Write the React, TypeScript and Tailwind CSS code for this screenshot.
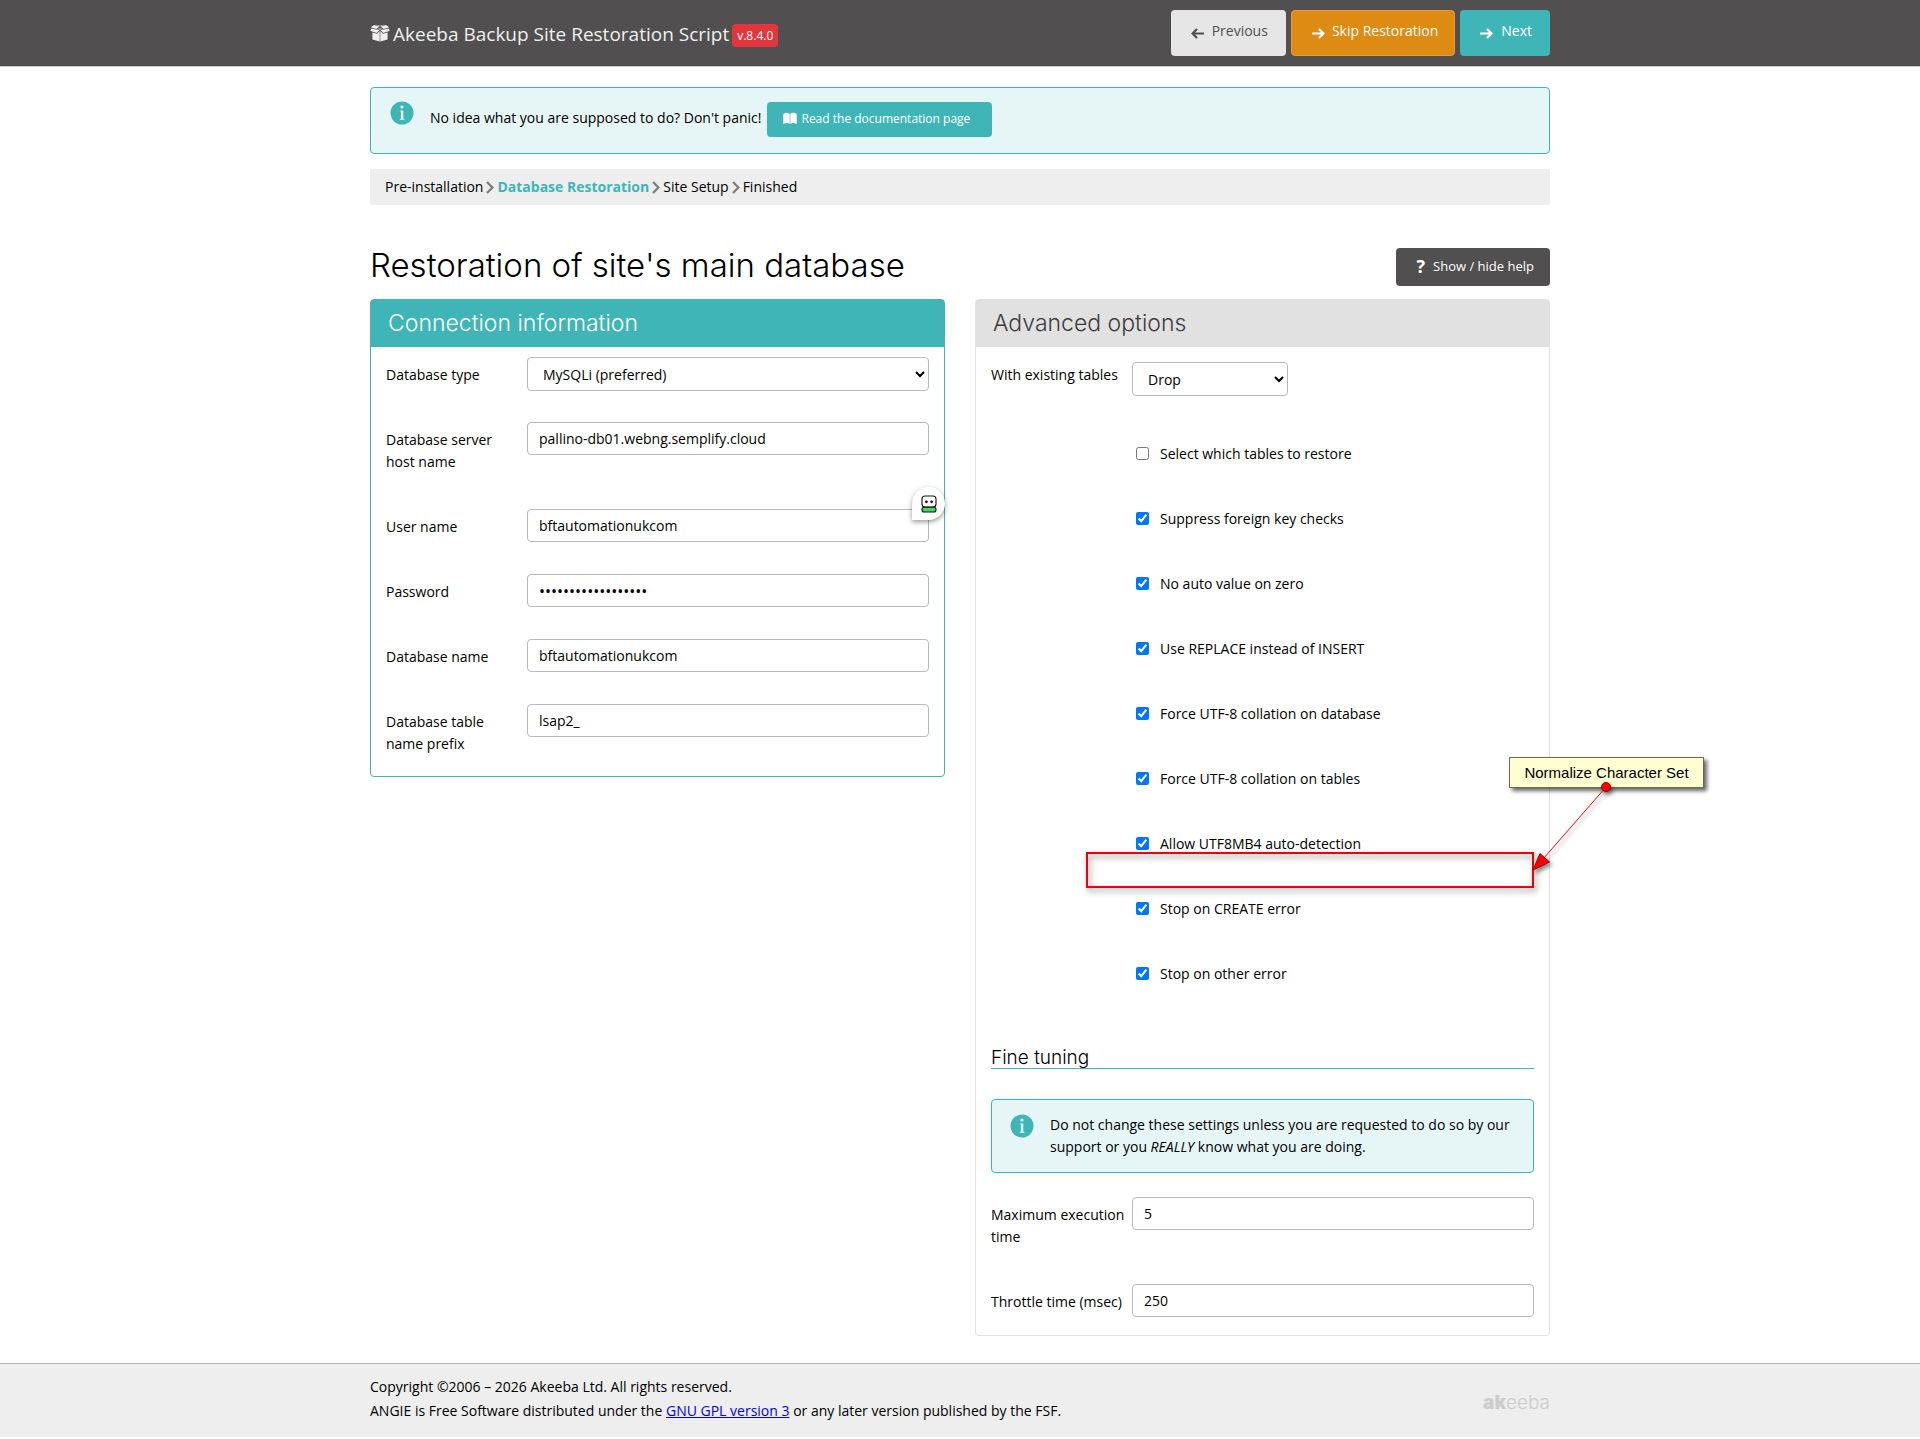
import type { ReactNode } from "react";

// small icon set used across the page
function BoxIcon() {
  return (
    <svg viewBox="0 0 20 18" className="w-5 h-[18px] mb-1 shrink-0" fill="#efefef" aria-hidden="true">
      <path d="M4.2 1 9.4 2.6 6.2 5 .6 3.2Z" />
      <path d="M15.8 1 10.6 2.6 13.8 5 19.4 3.2Z" />
      <path d="M5.4.4 10 1.8 14.6.4 10.4 2.2h-.8Z" />
      <path d="M.2 6.8 1.6 4.4 9.4 6.200 6.6 9Z" />
      <path d="M19.8 6.8 18.4 4.4 10.6 6.200 13.4 9Z" />
      <path d="M2.4 8.4 7 9.800 9.700 7V17.600L2.4 15.400Z" />
      <path d="M17.6 8.4 13 9.800 10.300 7V17.600L17.6 15.400Z" />
      <path d="M6.6 5.2 10 4l3.4 1.2L10 6Z" opacity=".6" />
    </svg>
  );
}

function ArrowIcon({ back = false }: { back?: boolean }) {
  return (
    <svg viewBox="0 0 13 11" className="mt-1 w-[13px] h-[11px] shrink-0" fill="none" stroke="currentColor" strokeWidth="2.2" aria-hidden="true">
      {back ? <path d="M13 5.5H2.2M6 1 1.6 5.5 6 10" /> : <path d="M0 5.5h10.8M7 1l4.4 4.5L7 10" />}
    </svg>
  );
}

function InfoIcon() {
  return (
    <svg viewBox="0 0 24 24" className="size-6 shrink-0" aria-hidden="true">
      <circle cx="12" cy="12" r="11.5" fill="#40b5b8" />
      <circle cx="12" cy="6" r="1.6" fill="#e6f6f6" />
      <path d="M9.8 9.4h3.5v8.4h1.1v.9H9.7v-.9h1.2V10.3H9.8Z" fill="#e6f6f6" />
    </svg>
  );
}

function BookIcon() {
  return (
    <svg viewBox="0 0 14 13" className="w-3.5 h-[13px] shrink-0" fill="currentColor" aria-hidden="true">
      <path d="M.3 2.2C1.6.2 5 .2 6.7 1.8V12C5 10.6 2.4 10.6.3 12.2Z" />
      <path d="M13.7 2.2C12.4.2 9 .2 7.3 1.8V12c1.7-1.4 4.3-1.4 6.4.2Z" />
    </svg>
  );
}

function Chevron() {
  return (
    <svg viewBox="0 0 8 13" className="w-2 h-[13px] shrink-0" fill="none" stroke="#7d7b7c" strokeWidth="2.2" aria-hidden="true">
      <path d="M1 1l5.4 5.5L1 12" />
    </svg>
  );
}

function RobotIcon() {
  return (
    <svg viewBox="0 0 16 18" className="w-4 h-[18px]" stroke="#111" strokeWidth="1.1" aria-hidden="true">
      <rect x="1" y="1" width="14" height="11" rx="3" fill="#fff" />
      <rect x="1" y="12.3" width="14" height="4.7" rx="2" fill="#3ddc5a" />
      <circle cx="5.4" cy="6.8" r="1.4" fill="#111" stroke="none" />
      <circle cx="10.6" cy="6.8" r="1.4" fill="#111" stroke="none" />
    </svg>
  );
}

const control = "border border-[#b9b9b9] rounded bg-white text-black";

function Row({ id, label, children }: { id: string; label: string; children: ReactNode }) {
  return (
    <div className="grid grid-cols-[137px_1fr] gap-x-1">
      <label htmlFor={id} className="pt-[7px] pb-[3px] leading-[22px]">{label}</label>
      <div className="relative h-8">{children}</div>
    </div>
  );
}

function TextRow({ id, label, value, children }: { id: string; label: string; value: string; children?: ReactNode }) {
  return (
    <Row id={id} label={label}>
      <input id={id} type="text" defaultValue={value} className={`${control} block w-full h-[33px] px-[11px]`} />
      {children}
    </Row>
  );
}

const checks = [
  { id: "specific", label: "Select which tables to restore", on: false },
  { id: "foreignkey", label: "Suppress foreign key checks", on: true },
  { id: "noautovalue", label: "No auto value on zero", on: true },
  { id: "replace", label: "Use REPLACE instead of INSERT", on: true },
  { id: "utf8db", label: "Force UTF-8 collation on database", on: true },
  { id: "utf8tables", label: "Force UTF-8 collation on tables", on: true },
  { id: "utf8mb4", label: "Allow UTF8MB4 auto-detection", on: true },
  { id: "createerror", label: "Stop on CREATE error", on: true },
  { id: "othererror", label: "Stop on other error", on: true },
];

function Header() {
  return (
    <header className="bg-[#514f50] border-b border-[#c9c9c9]">
      <div className="max-w-[1180px] mx-auto h-[66px] flex items-start justify-between pt-[10px]">
        <h1 className="flex items-center gap-[3px] h-[50px] text-[#efefef] text-[19px]">
          <BoxIcon />
          <span>Akeeba Backup Site Restoration Script</span>
          <span className="h-[23px] leading-[23px] px-[5px] rounded bg-[#e2363c] text-white text-xs">v.8.4.0</span>
        </h1>
        <div className="flex gap-[5px]">
          <button className="h-[46px] pl-5 pr-[18px] pb-1 flex items-center gap-2 rounded bg-[#e6e6e6] text-[#514f50]">
            <ArrowIcon back /> Previous
          </button>
          <button className="h-[46px] pl-5 pr-4 pb-1 flex items-center gap-[7px] rounded border border-[#f09a2c] bg-[#de8b14] text-white">
            <ArrowIcon /> Skip Restoration
          </button>
          <button className="h-[46px] pl-5 pr-[18px] pb-1 flex items-center gap-2 rounded bg-[#40b5b8] text-white">
            <ArrowIcon /> Next
          </button>
        </div>
      </div>
    </header>
  );
}

function ConnectionPanel() {
  return (
    <section className="border border-[#40b5b8] rounded">
      <h3 className="h-[47px] px-[17px] flex items-center bg-[#40b5b8] text-white font-[Inter] font-light text-[23px]">Connection information</h3>
      <div className="px-[15px] pt-[10px] pb-[18px] flex flex-col gap-[33px]">
        <Row id="dbtype" label="Database type">
          <select id="dbtype" className={`${control} block w-full h-[34px] pl-[11px]`}>
            <option>MySQLi (preferred)</option>
          </select>
        </Row>
        <TextRow id="dbhost" label="Database server host name" value="pallino-db01.webng.semplify.cloud" />
        <TextRow id="dbuser" label="User name" value="bftautomationukcom">
          <span className="absolute -right-4 -top-[22px] w-[33px] h-[33px] flex items-center justify-center bg-white rounded-full rounded-bl-none shadow-[0_2px_5px_rgba(0,0,0,0.4)]">
            <RobotIcon />
          </span>
        </TextRow>
        <Row id="dbpass" label="Password">
          <input id="dbpass" type="password" defaultValue="abcdefghijklmnopqr" className={`${control} block w-full h-[33px] px-[11px] text-base`} />
        </Row>
        <TextRow id="dbname" label="Database name" value="bftautomationukcom" />
        <TextRow id="prefix" label="Database table name prefix" value="lsap2_" />
      </div>
    </section>
  );
}

// note, arrow and frame drawn over the advanced panel
function Annotation() {
  return (
    <div className="pointer-events-none absolute inset-0">
      <div className="absolute top-[552px] right-[15px] w-[448px] h-9 border-2 border-[#f00000] drop-shadow-[2px_3px_3px_rgba(0,0,0,0.5)]" />
      <div className="absolute top-[457px] -right-[155px] w-[195px] h-[31px] flex items-center justify-center border border-[#6b6b55] bg-[#ffffd2] font-['Liberation_Sans'] text-[15px] shadow-[3px_3px_4px_rgba(0,0,0,0.6)]">
        Normalize Character Set
      </div>
      <svg viewBox="0 0 90 100" className="absolute top-[479px] -right-[72px] w-[90px] h-[100px] drop-shadow-[2px_3px_2px_rgba(0,0,0,0.5)]" aria-hidden="true">
        <path d="M75 8 12 80" stroke="#f00" strokeWidth="1" />
        <circle cx="75" cy="8" r="4.5" fill="#f00" stroke="#900" strokeWidth="1" />
        <path d="M2 91 9 74.500 18.500 83Z" fill="#f00" stroke="#900" strokeWidth="1" />
      </svg>
    </div>
  );
}

function AdvancedPanel() {
  return (
    <section className="relative border border-[#e1e1e1] rounded">
      <h3 className="h-[47px] px-[17px] flex items-center bg-[#e1e1e1] text-[#3d3c3d] font-[Inter] font-light text-[23px]">Advanced options</h3>
      <div className="px-[15px] pt-[10px] pb-[19px]">
        <Row id="existing" label="With existing tables">
          <select id="existing" className={`${control} block mt-[5px] w-[156px] h-[34px] pl-[11px]`}>
            <option>Drop</option>
          </select>
        </Row>

        <div className="mt-[54px] ml-[145px] flex flex-col gap-[43px]">
          {checks.map((c) => (
            <label key={c.id} htmlFor={c.id} className="flex items-center gap-[11px] h-[22px]">
              <input id={c.id} type="checkbox" defaultChecked={c.on} className="size-[13px] mb-0.5" />
              {c.label}
            </label>
          ))}
        </div>

        <h4 className="mt-[62px] border-b border-[#40b5b8] font-[Inter] font-light text-[19px] leading-[21px]">Fine tuning</h4>

        <div className="mt-[30px] mb-6 flex gap-4 border border-[#40b5b8] rounded bg-[#e6f6f6] h-[74px] pl-[18px] pr-4 pt-[14px]">
          <InfoIcon />
          <p className="leading-[22px]">
            Do not change these settings unless you are requested to do so by our support or you <em>REALLY</em> know what you are doing.
          </p>
        </div>

        <div className="flex flex-col gap-[33px]">
          <TextRow id="maxexec" label="Maximum execution time" value="5" />
          <TextRow id="throttle" label="Throttle time (msec)" value="250" />
        </div>
      </div>
      <Annotation />
    </section>
  );
}

function Footer() {
  return (
    <footer className="mt-[27px] bg-[#eee] border-t border-[#b5b5b5]">
      <div className="max-w-[1180px] mx-auto h-[73px] flex items-center justify-between">
        <div className="leading-6 pb-4 pt-3">
          <p>Copyright ©2006 – 2026 Akeeba Ltd. All rights reserved.</p>
          <p>
            ANGIE is Free Software distributed under the{" "}
            <a href="#gpl" className="text-[#0000ee] underline">GNU GPL version 3</a> or any later version published by the FSF.
          </p>
        </div>
        <div className="pt-1 text-[#cccccc] text-[19px] leading-6 font-[Inter]">
          <span className="font-black">ak</span>
          <span className="font-light">eeba</span>
        </div>
      </div>
    </footer>
  );
}

export default function App() {
  return (
    <div className="bg-white text-black text-sm font-['Open_Sans',sans-serif]">
      <Header />
      <main className="max-w-[1180px] mx-auto pt-5">
        <div className="flex items-start h-[67px] border border-[#40b5b8] rounded bg-[#e6f6f6] pl-[19px] pt-[13px]">
          <InfoIcon />
          <p className="ml-4 pt-px flex items-center">
            <span className="leading-[30px] pb-1">No idea what you are supposed to do? Don't panic!</span>
            <a href="#docs" className="ml-1.5 h-[35px] pl-4 pr-[22px] flex items-center gap-1 pb-0.5 rounded bg-[#40b5b8] text-white text-xs">
              <BookIcon /> Read the documentation page
            </a>
          </p>
        </div>

        <nav className="mt-[15px] h-9 px-[15px] flex items-center gap-[3px] bg-[#eee]">
          <span>Pre-installation</span>
          <Chevron />
          <strong className="text-[#40b5b8]">Database Restoration</strong>
          <Chevron />
          <span>Site Setup</span>
          <Chevron />
          <span>Finished</span>
        </nav>

        <div className="mt-[43px] mb-[13px] flex items-center justify-between">
          <h2 className="pb-1 font-[Inter] font-light text-[33px] leading-[34px]">Restoration of site's main database</h2>
          <button className="h-[38px] pl-5 pr-4 pb-0.5 flex items-center gap-2 rounded bg-[#514f50] text-white text-[13px]">
            <b className="text-lg">?</b> Show / hide help
          </button>
        </div>

        <div className="grid grid-cols-2 gap-[30px] items-start">
          <ConnectionPanel />
          <AdvancedPanel />
        </div>
      </main>
      <Footer />
    </div>
  );
}
